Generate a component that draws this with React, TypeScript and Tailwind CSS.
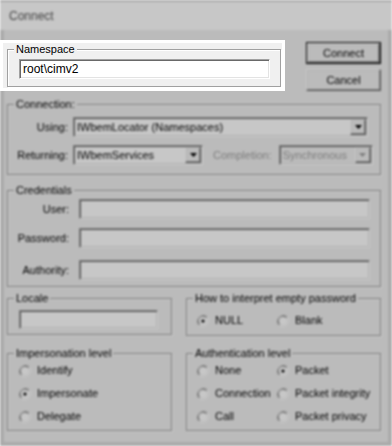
import type { ReactNode } from "react";

const FONT = { fontFamily: '"Liberation Sans", Arial, sans-serif' };

const SUNKEN =
  "border border-t-[#a0a0a0] border-l-[#a0a0a0] border-r-white border-b-white shadow-[inset_1px_1px_0_#696969,inset_-1px_-1px_0_#e3e3e3]";
const RAISED =
  "border border-t-white border-l-white border-r-[#696969] border-b-[#696969] shadow-[inset_-1px_-1px_0_#a0a0a0,inset_1px_1px_0_#e3e3e3]";

function Group({ label, className = "", children }: { label: string; className?: string; children: ReactNode }) {
  return (
    <div className={`border border-[#a0a0a0] shadow-[inset_1px_1px_0_#fff,1px_1px_0_#fff] ${className}`}>
      <div className="-mt-[7px] ml-[6px] w-fit bg-[#f0f0f0] px-[2px] leading-[13px]">{label}</div>
      {children}
    </div>
  );
}

function TextBox({ value = "", className = "" }: { value?: string; className?: string }) {
  return (
    <div className={`flex items-center bg-white pl-[3px] text-[12px] ${SUNKEN} ${className}`}>{value}</div>
  );
}

function Combo({ value, disabled = false, className = "" }: { value: string; disabled?: boolean; className?: string }) {
  return (
    <div className={`flex h-[20px] items-stretch ${SUNKEN} ${disabled ? "bg-[#f0f0f0] text-[#a0a0a0]" : "bg-white"} ${className}`}>
      <div className="flex flex-1 items-center overflow-hidden whitespace-nowrap pl-[3px] text-[11px]">{value}</div>
      <div className={`m-[1px] flex w-[16px] items-center justify-center bg-[#f0f0f0] ${RAISED}`}>
        <svg width="7" height="4" viewBox="0 0 7 4">
          <path d="M0 0h7L3.5 4z" fill={disabled ? "#a0a0a0" : "#000"} />
        </svg>
      </div>
    </div>
  );
}

function Radio({ label, checked = false, className = "" }: { label: string; checked?: boolean; className?: string }) {
  return (
    <div className={`flex h-[13px] items-center ${className}`}>
      <svg width="12" height="12" viewBox="0 0 12 12" className="shrink-0">
        <path d="M10.2 1.8A6 6 0 0 0 1.8 10.2" stroke="#a0a0a0" fill="none" />
        <path d="M9.4 2.6A4.9 4.9 0 0 0 2.6 9.4" stroke="#696969" fill="none" />
        <path d="M10.2 1.8A6 6 0 0 1 1.8 10.2" stroke="#fff" fill="none" />
        <circle cx="6" cy="6" r="4" fill="#fff" />
        {checked && <circle cx="6" cy="6" r="1.6" fill="#000" />}
      </svg>
      <span className="ml-[6px] leading-[13px]">{label}</span>
    </div>
  );
}

function NamespaceGroup() {
  return (
    <Group label="Namespace" className="w-[274px]">
      <TextBox value="root\cimv2" className="ml-[11px] mt-[3px] mb-[7px] h-[20px] w-[251px]" />
    </Group>
  );
}

export default function App() {
  return (
    <div className="relative h-[446px] w-[392px] overflow-hidden bg-white text-[11px] text-black" style={FONT}>
      {/* dimmed, blurred dialog */}
      <div className="flex h-full flex-col bg-white blur-[1px] brightness-[0.78]">
        <div className="flex h-[30px] items-center border-t-2 border-[#d8d8d8] pl-[9px] text-[12px] text-[#555]">Connect</div>
        <div className="flex flex-1 flex-col border-x-[4px] border-b-[4px] border-[#dadada] bg-[#f0f0f0] pl-[3px]">
          <div className="mt-[12px] flex items-start">
            <div className="mt-[7px]">
              <NamespaceGroup />
            </div>
            <div className="ml-auto mr-[7px] flex flex-col gap-[5px]">
              <div className="border border-black">
                <div className={`flex h-[20px] w-[73px] items-center justify-center bg-[#f0f0f0] ${RAISED}`}>Connect</div>
              </div>
              <div className={`flex h-[22px] w-[75px] items-center justify-center bg-[#f0f0f0] ${RAISED}`}>Cancel</div>
            </div>
          </div>

          <Group label="Connection:" className="mt-[13px] w-[374px] pb-[9px]">
            <div className="mt-[6px] flex items-center">
              <span className="w-[60px] text-right">Using:</span>
              <Combo value="IWbemLocator (Namespaces)" className="ml-[5px] w-[295px]" />
            </div>
            <div className="mt-[8px] flex items-center">
              <span className="w-[60px] text-right">Returning:</span>
              <Combo value="IWbemServices" className="ml-[5px] w-[130px]" />
              <span className="ml-[10px] text-[#a0a0a0]">Completion:</span>
              <Combo value="Synchronous" disabled className="ml-[7px] w-[94px]" />
            </div>
          </Group>

          <Group label="Credentials" className="mt-[15px] w-[374px] pb-[6px]">
            <div className="mt-[2px] flex items-center">
              <span className="w-[61px] text-right">User:</span>
              <TextBox className="ml-[10px] h-[20px] w-[291px]" />
            </div>
            <div className="mt-[9px] flex items-center">
              <span className="w-[61px] text-right">Password:</span>
              <TextBox className="ml-[10px] h-[20px] w-[291px]" />
            </div>
            <div className="mt-[12px] flex items-center">
              <span className="w-[61px] text-right">Authority:</span>
              <TextBox className="ml-[10px] h-[20px] w-[291px]" />
            </div>
          </Group>

          <div className="mt-[11px] flex items-start gap-[14px]">
            <Group label="Locale" className="w-[165px] pb-[5px]">
              <TextBox className="ml-[11px] mt-[5px] h-[19px] w-[139px]" />
            </Group>
            <Group label="How to interpret empty password" className="w-[195px] pb-[8px]">
              <div className="ml-[10px] mt-[9px] flex">
                <Radio label="NULL" checked className="w-[80px]" />
                <Radio label="Blank" />
              </div>
            </Group>
          </div>

          <div className="mt-[17px] flex items-start gap-[14px]">
            <Group label="Impersonation level" className="w-[165px] pb-[7px]">
              <div className="ml-[11px] mt-[4px] flex flex-col gap-[10px]">
                <Radio label="Identify" />
                <Radio label="Impersonate" checked />
                <Radio label="Delegate" />
              </div>
            </Group>
            <Group label="Authentication level" className="w-[195px] pb-[7px]">
              <div className="ml-[10px] mt-[4px] grid grid-cols-[80px_1fr] gap-y-[10px]">
                <Radio label="None" />
                <Radio label="Packet" checked />
                <Radio label="Connection" />
                <Radio label="Packet integrity" />
                <Radio label="Call" />
                <Radio label="Packet privacy" />
              </div>
            </Group>
          </div>
        </div>
      </div>

      {/* highlighted namespace box */}
      <div className="absolute left-0 top-[40px] h-[51px] w-[285px] border-[3px] border-white bg-[#f0f0f0] pl-[4px] pt-[6px]">
        <NamespaceGroup />
      </div>
    </div>
  );
}
